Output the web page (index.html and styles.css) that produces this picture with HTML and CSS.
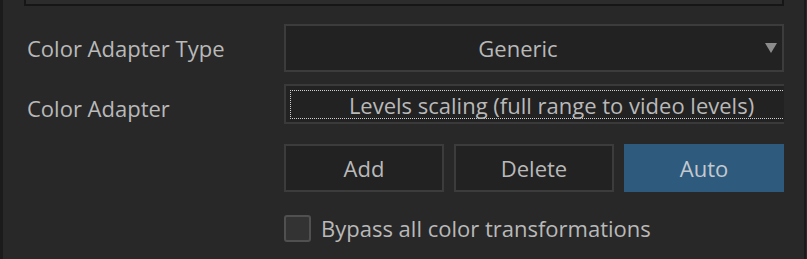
FILE: index.html
```html
<!DOCTYPE html>
<html lang="en">
<head>
    <meta charset="UTF-8">
    <title>Color Adapter</title>
    <link rel="stylesheet" href="styles.css">
</head>
<body>
    <div class="panel">
        <div class="top-box"></div>

        <div class="form">
            <div class="label row-type">Color Adapter Type</div>
            <div class="combo row-type">
                <span class="combo-text">Generic</span>
                <span class="combo-arrow"></span>
            </div>

            <div class="label row-adapter">Color Adapter</div>
            <div class="list-clip row-adapter">
                <div class="list-item">
                    <span class="focus-ring">Levels scaling (full range to video levels)</span>
                </div>
            </div>

            <div class="buttons">
                <button class="btn">Add</button>
                <button class="btn">Delete</button>
                <button class="btn btn-primary">Auto</button>
            </div>

            <label class="check">
                <span class="check-box"></span>
                <span class="check-text">Bypass all color transformations</span>
            </label>
        </div>
    </div>
</body>
</html>
```

FILE: styles.css
```css
body {
    margin: 0;
    background-color: #282828;
    font-family: "Open Sans", "Liberation Sans", sans-serif;
    font-size: 22px;
    color: #b9b9b9;
}

.panel {
    height: 259px;
    width: 806px;
    border-left: 3px solid #1b1b1b;
    border-right: 2px solid #1b1b1b;
    box-sizing: border-box;
    overflow: hidden;
}

.top-box {
    margin-left: 21px;
    width: 760px;
    height: 6px;
    box-sizing: border-box;
    border: 2px solid #161616;
    border-top: none;
    background-color: #2c2c2c;
}

.form {
    display: grid;
    grid-template-columns: 257px 500px;
    padding: 18px 0 0 24px;
}

.label {
    display: flex;
    align-items: center;
    line-height: 28px;
}

.row-type {
    height: 48px;
}

.row-adapter {
    height: 40px;
    margin-top: 12px;
}

.label.row-adapter {
    padding-top: 8px;
    box-sizing: border-box;
}

.combo {
    position: relative;
    display: flex;
    align-items: center;
    justify-content: center;
    box-sizing: border-box;
    border: 2px solid #3c3c3c;
    background-color: #222222;
    padding-right: 32px;
}

.combo-arrow {
    position: absolute;
    right: 5px;
    top: 17px;
    width: 0;
    height: 0;
    border-left: 6px solid transparent;
    border-right: 6px solid transparent;
    border-top: 10px solid #8c8c8c;
}

.list-clip {
    overflow: hidden;
}

.list-item {
    width: 529px;
    height: 40px;
    box-sizing: border-box;
    border: 2px solid #3a3a3a;
    border-right: none;
    background-color: #222222;
    padding: 4px 0 3px 4px;
}

.focus-ring {
    display: flex;
    align-items: center;
    justify-content: center;
    height: 100%;
    box-sizing: border-box;
    border: 1px dotted #d0d0d0;
    line-height: 28px;
}

.buttons {
    grid-column: 2;
    display: flex;
    gap: 10px;
    margin-top: 20px;
}

.btn {
    width: 160px;
    height: 48px;
    font-family: inherit;
    font-size: 22px;
    color: #b9b9b9;
    background-color: #222222;
    border: 2px solid #3c3c3c;
    padding: 0;
}

.btn-primary {
    background-color: #2e5a7e;
    border-color: #2e5a7e;
    color: #c3c9cf;
}

.check {
    grid-column: 2;
    display: flex;
    align-items: center;
    gap: 10px;
    margin-top: 21px;
}

.check-box {
    width: 27px;
    height: 27px;
    box-sizing: border-box;
    border: 2px solid #505050;
    border-radius: 3px;
    background-color: #333333;
}
```
